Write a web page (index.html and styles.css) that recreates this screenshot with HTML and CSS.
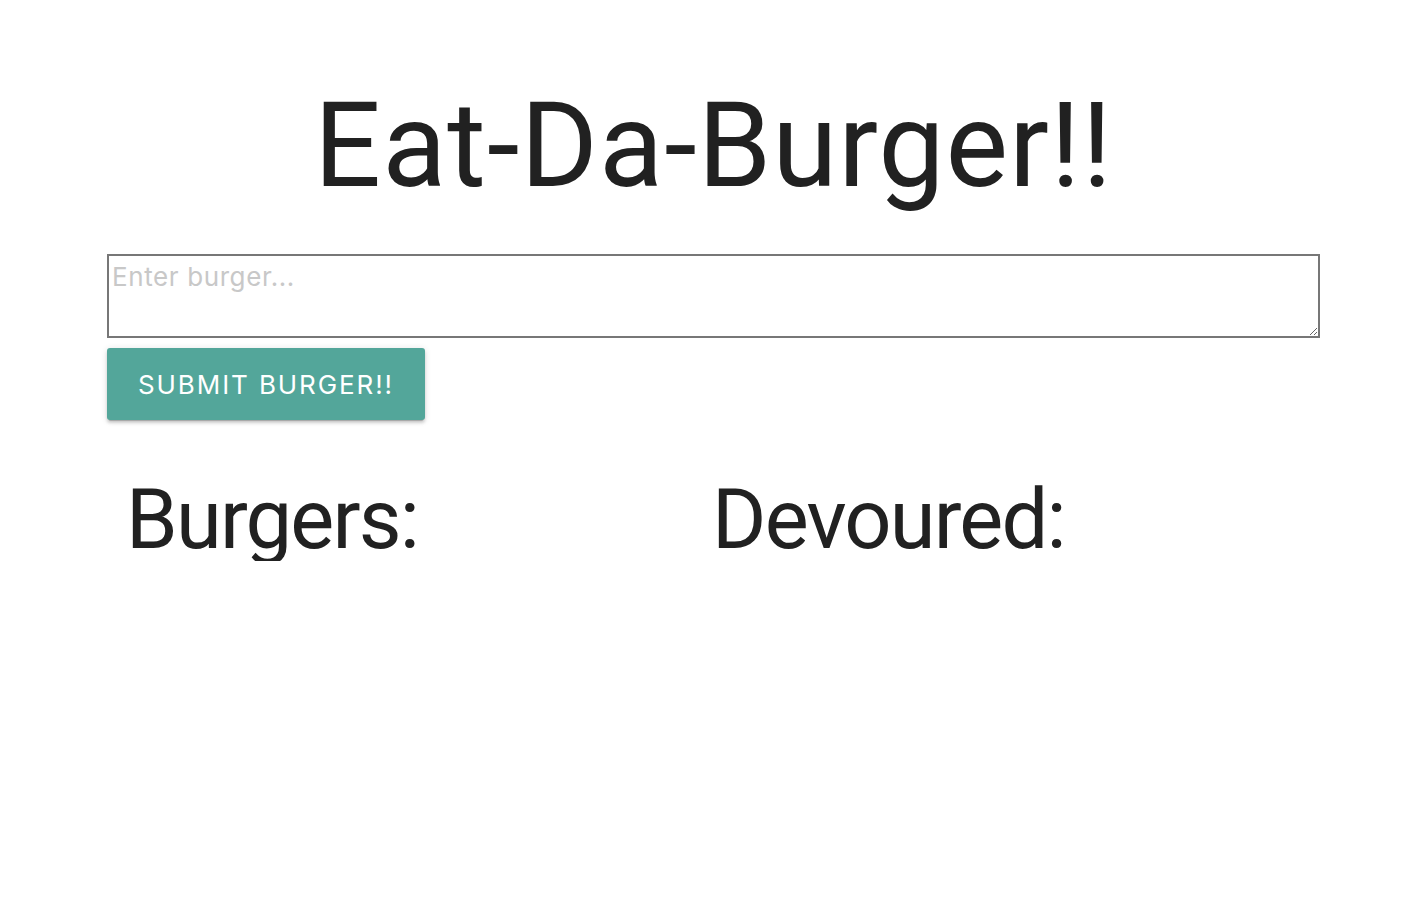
FILE: index.html
```html
<!DOCTYPE html>
<html lang="en">
<head>
<meta charset="utf-8">
<title>Eat-Da-Burger!!</title>
<link rel="stylesheet" href="styles.css">
</head>
<body>
<div class="container">
  <h1 class="title">Eat-Da-Burger!!</h1>
  <form class="burger-form">
    <textarea class="burger-input" placeholder="Enter burger..."></textarea>
    <button type="button" class="btn">Submit Burger!!</button>
  </form>
  <div class="lists">
    <div class="col"><h2 class="list-title">Burgers:</h2></div>
    <div class="col"><h2 class="list-title">Devoured:</h2></div>
  </div>
</div>
</body>
</html>
```

FILE: styles.css
```css
html, body {
  margin: 0;
  padding: 0;
  background: #ffffff;
}
body {
  font-family: Inter, "Noto Sans", sans-serif;
  color: rgba(0, 0, 0, 0.87);
}
.container {
  width: 85%;
  margin: 0 auto;
}
.title {
  margin: 87px 0 0;
  font-family: Roboto, Inter, sans-serif;
  font-size: 118px;
  line-height: 1;
  font-weight: 400;
  letter-spacing: 1px;
  text-align: center;
  color: #212121;
}
.burger-form {
  display: flex;
  flex-direction: column;
  align-items: flex-start;
  margin-top: 49px;
}
.burger-input {
  box-sizing: border-box;
  width: 100%;
  height: 84px;
  margin: 0;
  border: 2px solid #777777;
  padding: 5px 3px;
  font-family: Inter, "Noto Sans", sans-serif;
  font-size: 26px;
  line-height: 1.2;
  letter-spacing: 0.6px;
  color: #212121;
  background: #ffffff;
}
.burger-input::placeholder {
  color: #c8c8c8;
}
.btn {
  margin-top: 10px;
  height: 72px;
  padding: 0 31px;
  border: none;
  border-radius: 3px;
  background: #53a69a;
  color: #ffffff;
  font-family: Inter, "Noto Sans", sans-serif;
  font-size: 26px;
  letter-spacing: 1.9px;
  text-transform: uppercase;
  box-shadow: 0 3px 3px 0 rgba(0,0,0,0.14), 0 1px 7px 0 rgba(0,0,0,0.12), 0 3px 1px -2px rgba(0,0,0,0.2);
  cursor: pointer;
}
.lists {
  display: grid;
  grid-template-columns: 586px 1fr;
  margin-top: 58px;
  padding-left: 19px;
}
.list-title {
  margin: 0;
  font-family: Roboto, Inter, sans-serif;
  font-size: 83px;
  line-height: 1;
  font-weight: 400;
  letter-spacing: -1.8px;
  color: #212121;
}
```
